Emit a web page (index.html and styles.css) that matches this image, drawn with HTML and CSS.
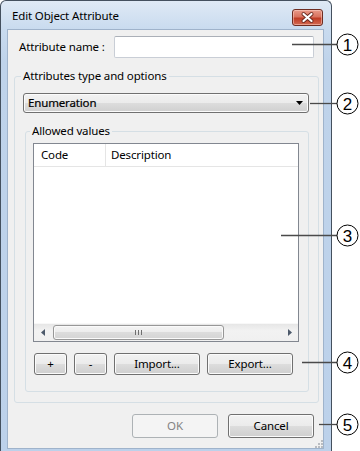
FILE: index.html
```html
<!DOCTYPE html>
<html>
<head>
<meta charset="utf-8">
<title>Edit Object Attribute</title>
<link rel="stylesheet" href="styles.css">
</head>
<body>
<div class="stage">
  <div class="window">
    <div class="titlebar">
      <span class="title">Edit Object Attribute</span>
      <div class="close">
        <svg width="29" height="15" viewBox="0 0 29 15">
          <path d="M10.5 4 L18.5 11 M18.5 4 L10.5 11" stroke="#6b2a20" stroke-width="4" stroke-linecap="round"/>
          <path d="M10.5 4 L18.5 11 M18.5 4 L10.5 11" stroke="#ffffff" stroke-width="2.2" stroke-linecap="round"/>
        </svg>
      </div>
    </div>
    <div class="client">
      <div class="name-row">
        <span class="lbl">Attribute name :</span>
        <div class="textbox"></div>
      </div>
      <fieldset class="group outer">
        <legend>Attributes type and options</legend>
        <div class="combo">
          <span>Enumeration</span>
          <svg class="combo-arrow" width="7" height="4" viewBox="0 0 7 4"><path d="M0 0 H7 L3.5 4 Z" fill="#000"/></svg>
        </div>
        <fieldset class="group inner">
          <legend>Allowed values</legend>
          <div class="list">
            <div class="list-header">
              <div class="col col-code">Code</div>
              <div class="col col-desc">Description</div>
            </div>
            <div class="list-body"></div>
            <div class="hscroll">
              <div class="sb-arrow">
                <svg width="4" height="7" viewBox="0 0 4 7"><path d="M4 0 V7 L0 3.5 Z" fill="#4d5a6b"/></svg>
              </div>
              <div class="sb-track">
                <div class="sb-thumb">
                  <svg width="7" height="5" viewBox="0 0 7 5"><path d="M0.5 0 V5 M3.5 0 V5 M6.5 0 V5" stroke="#6f6f6f" stroke-width="1"/></svg>
                </div>
              </div>
              <div class="sb-arrow">
                <svg width="4" height="7" viewBox="0 0 4 7"><path d="M0 0 V7 L4 3.5 Z" fill="#4d5a6b"/></svg>
              </div>
            </div>
          </div>
          <div class="btn-row">
            <button class="btn btn-sm">+</button>
            <button class="btn btn-sm">-</button>
            <button class="btn btn-md">Import...</button>
            <button class="btn btn-md">Export...</button>
          </div>
        </fieldset>
      </fieldset>
      <div class="footer">
        <button class="btn btn-lg disabled">OK</button>
        <button class="btn btn-lg">Cancel</button>
      </div>
      <svg class="grip" width="9" height="9" viewBox="0 0 9 9">
        <g fill="#b9bcc1">
          <rect x="7" y="1" width="2" height="2"/>
          <rect x="4" y="4" width="2" height="2"/><rect x="7" y="4" width="2" height="2"/>
          <rect x="1" y="7" width="2" height="2"/><rect x="4" y="7" width="2" height="2"/><rect x="7" y="7" width="2" height="2"/>
        </g>
      </svg>
    </div>
  </div>

  <svg class="callouts" width="360" height="451" viewBox="0 0 360 451">
    <g stroke="#4a4a4a" stroke-width="1.3">
      <line x1="292" y1="44.5" x2="337" y2="44.5"/>
      <line x1="310" y1="103.5" x2="337" y2="103.5"/>
      <line x1="281" y1="235.5" x2="337" y2="235.5"/>
      <line x1="302" y1="362.5" x2="337" y2="362.5"/>
      <line x1="319" y1="424.5" x2="337" y2="424.5"/>
    </g>
    <g fill="#fff" stroke="#000" stroke-width="1">
      <circle cx="347.5" cy="44.5" r="10.5"/>
      <circle cx="347.5" cy="103.5" r="10.5"/>
      <circle cx="347.5" cy="235.5" r="10.5"/>
      <circle cx="347.5" cy="362.5" r="10.5"/>
      <circle cx="347.5" cy="424.5" r="10.5"/>
    </g>
    <g class="num">
      <text x="347.5" y="50.5">1</text>
      <text x="347.5" y="109.5">2</text>
      <text x="347.5" y="241.5">3</text>
      <text x="347.5" y="368.5">4</text>
      <text x="347.5" y="430.5">5</text>
    </g>
  </svg>
</div>
</body>
</html>
```

FILE: styles.css
```css
* {
  box-sizing: border-box;
}

html,
body {
  margin: 0;
  padding: 0;
}

body {
  width: 360px;
  height: 451px;
  overflow: hidden;
  background: #ffffff;
  font-family: "Noto Sans", "Open Sans", sans-serif;
  font-size: 11.5px;
  letter-spacing: -0.15px;
  color: #000;
}

.stage {
  position: relative;
  width: 360px;
  height: 451px;
  overflow: hidden;
}

/* window frame */
.window {
  width: 332px;
  height: 460px;
  border: 1px solid #44505e;
  border-bottom: none;
  border-radius: 6px 6px 0 0;
  background: linear-gradient(#dfe9f5 0px, #c9dbef 28px, #bfd3ea 60px, #bcd1ea 100%);
  padding: 0 7px 0 6px;
  display: flex;
  flex-direction: column;
}

.titlebar {
  height: 28px;
  flex: none;
  display: flex;
  align-items: flex-start;
  position: relative;
}

.title {
  margin: 7px 0 0 5px;
  line-height: 16px;
  color: #000;
}

.close {
  position: absolute;
  top: 8px;
  right: 1px;
  width: 31px;
  height: 17px;
  border: 1px solid #6e2d22;
  border-radius: 3px;
  background: linear-gradient(#e99a89 0%, #d9735f 45%, #c03c25 55%, #d26a52 100%);
  box-shadow: inset 0 0 0 1px rgba(255, 215, 205, 0.5);
  display: flex;
  align-items: center;
  justify-content: center;
}

.close svg {
  display: block;
}

.client {
  width: 317px;
  height: 420px;
  flex: none;
  border: 1px solid #9fb3cb;
  background: #f0f0f0;
  display: flex;
  flex-direction: column;
  position: relative;
}

/* attribute name row */
.name-row {
  display: flex;
  align-items: center;
  height: 22px;
  margin-top: 6px;
  padding: 0 9px 0 11px;
}

.lbl {
  line-height: 16px;
}

.textbox {
  margin-left: auto;
  width: 200px;
  height: 22px;
  background: #fff;
  border: 1px solid #c9ced6;
  border-top-color: #abb0b8;
  border-radius: 2px;
}

/* group boxes */
.group {
  border: 1px solid #d5dfe5;
  border-radius: 3px;
  min-width: 0;
}

.group legend {
  padding: 0 2px;
  line-height: 16px;
}

.outer {
  margin: 10px 4px 0 6px;
  padding: 0 9px 10px 8px;
}

.outer > legend {
  margin-left: -2px;
}

.inner {
  margin: 10px 0 0 2px;
  padding: 0 9px 16px 7px;
}

.inner > legend {
  margin-left: -3px;
}

/* combo box */
.combo {
  margin-top: 9px;
  height: 20px;
  border: 1px solid #707070;
  border-radius: 3px;
  background: linear-gradient(#f2f2f2 0%, #ebebeb 50%, #dddddd 50%, #cfcfcf 100%);
  box-shadow: inset 0 0 0 1px #fbfbfb;
  display: flex;
  align-items: center;
  padding: 0 5px 0 4px;
}

.combo span {
  flex: 1;
  line-height: 16px;
  -webkit-text-stroke: 0.2px #000;
}

.combo-arrow {
  display: block;
}

/* list view */
.list {
  margin-top: 4px;
  height: 199px;
  border: 1px solid #828790;
  background: #fff;
  display: flex;
  flex-direction: column;
}

.list-header {
  height: 23px;
  flex: none;
  display: flex;
  border-bottom: 1px solid #e5e5e5;
  background: #fff;
}

.col {
  line-height: 22px;
  white-space: nowrap;
}

.col-code {
  width: 72px;
  padding-left: 7px;
  border-right: 1px solid #e5e5e5;
}

.col-desc {
  padding-left: 5px;
}

.list-body {
  flex: 1;
}

.hscroll {
  height: 18px;
  flex: none;
  display: flex;
  align-items: stretch;
  background: linear-gradient(#e6e6e6, #f2f2f2 40%, #f0f0f0);
  border-top: 1px solid #f8f8f8;
}

.sb-arrow {
  width: 17px;
  flex: none;
  display: flex;
  align-items: center;
  justify-content: center;
}

.sb-arrow svg {
  display: block;
}

.sb-track {
  flex: 1;
  display: flex;
  align-items: stretch;
  padding: 1px 0 1px 2px;
}

.sb-thumb {
  width: 171px;
  border: 1px solid #979797;
  border-radius: 3px;
  background: linear-gradient(#f4f4f4 0%, #ececec 50%, #dcdcdc 50%, #d4d4d4 100%);
  box-shadow: inset 0 0 0 1px #fafafa;
  display: flex;
  align-items: center;
  justify-content: center;
}

.sb-thumb svg {
  display: block;
}

/* buttons */
.btn {
  font-family: inherit;
  font-size: 11.5px;
  letter-spacing: -0.15px;
  color: #000;
  border: 1px solid #707070;
  border-radius: 3px;
  background: linear-gradient(#f2f2f2 0%, #ebebeb 50%, #dddddd 50%, #cfcfcf 100%);
  box-shadow: inset 0 0 0 1px #fbfbfb;
  padding: 0;
  margin: 0;
  line-height: 16px;
}

.btn-row {
  display: flex;
  gap: 7px;
  margin-top: 11px;
  padding-left: 1px;
}

.btn-sm {
  width: 33px;
  height: 22px;
}

.btn-md {
  width: 86px;
  height: 22px;
}

.footer {
  display: flex;
  justify-content: flex-end;
  gap: 10px;
  margin-top: 11px;
  padding-right: 9px;
}

.btn-lg {
  width: 86px;
  height: 24px;
}

.btn.disabled {
  border-color: #adb2b5;
  background: #f4f4f4;
  box-shadow: none;
  color: #838383;
}

.grip {
  position: absolute;
  right: 0;
  bottom: 0;
  display: block;
}

/* annotation callouts */
.callouts {
  position: absolute;
  left: 0;
  top: 0;
  display: block;
}

.num text {
  font-family: "Liberation Sans", Arial, sans-serif;
  font-size: 17px;
  letter-spacing: 0;
  text-anchor: middle;
  fill: #000;
}
```
